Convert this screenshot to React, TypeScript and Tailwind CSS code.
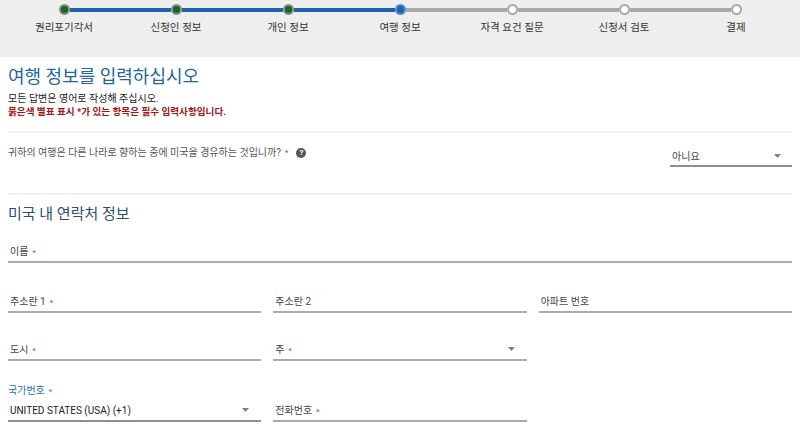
import React from "react";

const steps = ["권리포기각서", "신청인 정보", "개인 정보", "여행 정보", "자격 요건 질문", "신청서 검토", "결제"];
const current = 3;

function Caret() {
  return (
    <svg width="7" height="4" viewBox="0 0 7 4" className="shrink-0">
      <path d="M0 0h7L3.5 4z" fill="#808080" />
    </svg>
  );
}

function Req() {
  return <span className="ml-1 text-[8px] text-[#d33]">*</span>;
}

function Field({ label, required, select, className = "" }: { label: string; required?: boolean; select?: boolean; className?: string }) {
  return (
    <div className={`flex h-[22px] items-center justify-between border-b-2 border-[#ababab] pr-3 pl-[2px] ${className}`}>
      <span className="text-[10px] text-[#444]">
        {label}
        {required && <Req />}
      </span>
      {select && <Caret />}
    </div>
  );
}

function Stepper() {
  return (
    <div className="flex h-[57px] bg-[#eeeeee] px-2">
      {steps.map((s, i) => {
        const leftColor = i <= current ? "bg-[#1e63b0]" : "bg-[#a9a9a9]";
        const rightColor = i < current ? "bg-[#1e63b0]" : "bg-[#a9a9a9]";
        let dot = "bg-[#0b6a1c] border-[#8a8a8a]";
        if (i === current) dot = "bg-[#1e63b0] border-[#4f8ad0]";
        if (i > current) dot = "bg-white border-[#a9a9a9]";
        return (
          <div key={s} className="flex flex-1 flex-col items-center">
            <div className="flex h-[19px] w-full items-center">
              <div className={`h-[4px] flex-1 ${i === 0 ? "" : leftColor}`} />
              <div className={`h-[11px] w-[11px] shrink-0 rounded-full border-2 ${dot}`} />
              <div className={`h-[4px] flex-1 ${i === steps.length - 1 ? "" : rightColor}`} />
            </div>
            <div className="mt-[1px] text-[10.5px] text-[#333]">{s}</div>
          </div>
        );
      })}
    </div>
  );
}

export default function App() {
  return (
    <div className="h-[434px] w-[800px] overflow-hidden bg-white font-['Roboto','Noto_Sans_CJK_KR',sans-serif]">
      <Stepper />
      <div className="px-2">
        <h1 className="mt-[7px] text-[18px] leading-[26px] text-[#23679a]">여행 정보를 입력하십시오</h1>
        <p className="mt-[2px] text-[10px] leading-[13px] text-[#222]">모든 답변은 영어로 작성해 주십시오.</p>
        <p className="text-[9.6px] font-bold leading-[13px] text-[#a31515]">붉은색 별표 표시 *가 있는 항목은 필수 입력사항입니다.</p>

        <div className="mt-[13px] h-[2px] bg-[#f0f0f0]" />

        <div className="flex items-start justify-between pt-[11px]">
          <div className="mt-[1px] flex items-center text-[10px] text-[#555]">
            귀하의 여행은 다른 나라로 향하는 중에 미국을 경유하는 것입니까?
            <Req />
            <span className="ml-[8px] flex h-[10px] w-[10px] items-center justify-center rounded-full bg-[#555] text-[8px] font-bold leading-none text-white">?</span>
          </div>
          <div className="mt-[3px] flex h-[20px] w-[122px] items-center justify-between border-b-2 border-[#8f8f8f] pr-[11px] pl-[2px]">
            <span className="text-[10px] text-[#444]">아니요</span>
            <Caret />
          </div>
        </div>

        <div className="mt-[26px] h-[2px] bg-[#f0f0f0]" />

        <h2 className="mt-[8px] text-[15px] leading-[22px] text-[#2f4f6f]">미국 내 연락처 정보</h2>

        <Field label="이름" required className="mt-[16px]" />

        <div className="mt-[28px] grid grid-cols-3 gap-3">
          <Field label="주소란 1" required />
          <Field label="주소란 2" />
          <Field label="아파트 번호" />
        </div>

        <div className="mt-[26px] grid grid-cols-3 gap-3">
          <Field label="도시" required />
          <Field label="주" required select />
        </div>

        <div className="mt-[23px] grid grid-cols-3 gap-3">
          <div>
            <div className="text-[10px] leading-[13px] text-[#2d6db5]">
              국가번호
              <Req />
            </div>
            <div className="mt-[2px] flex h-[22px] items-center justify-between border-b-2 border-[#8f8f8f] pr-[12px] pl-[2px]">
              <span className="text-[10px] text-[#222]">UNITED STATES (USA) (+1)</span>
              <Caret />
            </div>
          </div>
          <div className="flex flex-col justify-end">
            <Field label="전화번호" required className="border-[#8f8f8f]" />
          </div>
        </div>
      </div>
    </div>
  );
}
